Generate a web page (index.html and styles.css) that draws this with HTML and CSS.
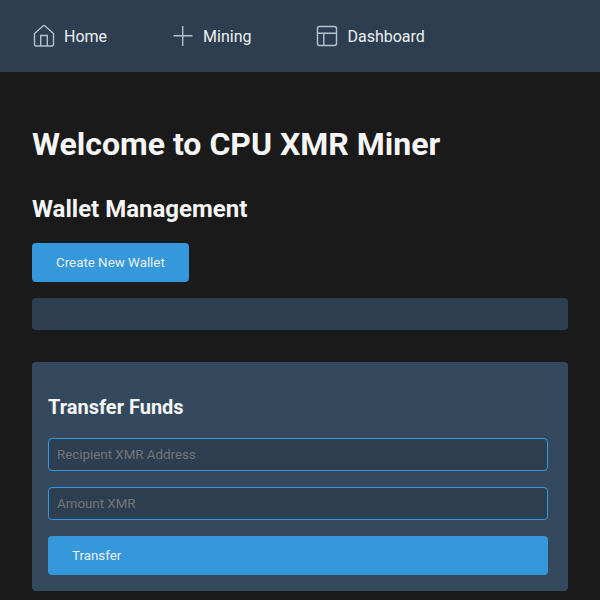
FILE: index.html
```html
<!DOCTYPE html>
<html lang="en">
<head>
  <meta charset="UTF-8">
  <meta name="viewport" content="width=device-width, initial-scale=1.0">
  <title>CPU XMR Miner</title>
  <link rel="stylesheet" href="styles.css">
</head>
<body>
  <nav class="nav">
    <a class="nav-link" href="#">
      <svg class="nav-icon" viewBox="0 0 24 24"><path d="M2.500 9.500 11 2a1.500 1.500 0 0 1 2 0l8.500 7.500V20.500a1.500 1.500 0 0 1-1.500 1.500H4a1.500 1.500 0 0 1-1.500-1.500z"/><path d="M8.700 22V11.500h6.600V22"/></svg>
      <span>Home</span>
    </a>
    <a class="nav-link" href="#">
      <svg class="nav-icon" viewBox="0 0 24 24"><path d="M11.700 2v20M2.500 11.800h19"/></svg>
      <span>Mining</span>
    </a>
    <a class="nav-link" href="#">
      <svg class="nav-icon" viewBox="0 0 24 24"><rect x="2.500" y="2.500" width="19" height="19" rx="2"/><path d="M2.500 9.300h19M8.800 9.300v12.200"/></svg>
      <span>Dashboard</span>
    </a>
  </nav>

  <main class="content">
    <h1>Welcome to CPU XMR Miner</h1>
    <h2>Wallet Management</h2>
    <button class="btn">Create New Wallet</button>
    <div class="wallet-info"></div>

    <section class="panel">
      <h3>Transfer Funds</h3>
      <input class="field" type="text" placeholder="Recipient XMR Address">
      <input class="field" type="text" placeholder="Amount XMR">
      <button class="btn btn-full">Transfer</button>
    </section>
  </main>
</body>
</html>
```

FILE: styles.css
```css
/* Page */
* {
  box-sizing: border-box;
}

body {
  margin: 0;
  font-family: Roboto, "Liberation Sans", sans-serif;
  color: #f5f5f5;
  background-color: #1a1a1a;
}

/* Top navigation */
.nav {
  display: flex;
  gap: 64px;
  height: 72px;
  padding: 24px 32px;
  background-color: #2c3e50;
}

.nav-link {
  display: flex;
  align-items: center;
  gap: 8px;
  font-size: 16px;
  color: #ecf0f1;
  text-decoration: none;
}

.nav-icon {
  width: 24px;
  height: 24px;
  fill: none;
  stroke: #b4c2cc;
  stroke-width: 1.400;
}

/* Main content */
.content {
  padding: 32px;
}

h1 {
  margin: 21px 0 0;
  font-size: 32px;
  line-height: 38px;
  font-weight: 700;
}

h2 {
  margin: 32px 0 0;
  font-size: 24px;
  line-height: 28px;
  font-weight: 700;
}

h3 {
  margin: 17px 0 19px;
  font-size: 20px;
  line-height: 24px;
  font-weight: 700;
}

.btn {
  display: block;
  height: 39px;
  padding: 0 24px;
  font-family: inherit;
  font-size: 13.333px;
  text-align: left;
  color: #ecf0f1;
  background-color: #3498db;
  border: none;
  border-radius: 4px;
  cursor: pointer;
}

.btn-full {
  width: 100%;
}

h2 + .btn {
  margin-top: 20px;
}

.wallet-info {
  height: 32px;
  margin-top: 16px;
  background-color: #2c3e50;
  border-radius: 4px;
}

.panel {
  margin-top: 32px;
  padding: 16px 20px 16px 16px;
  background-color: #34495e;
  border-radius: 4px;
}

.field {
  display: block;
  width: 100%;
  height: 33px;
  margin-bottom: 16px;
  padding: 0 8px;
  font-family: inherit;
  font-size: 13.333px;
  color: #ecf0f1;
  background-color: #2c3e50;
  border: 1px solid #3498db;
  border-radius: 4px;
}

.field::placeholder {
  color: #757575;
}
```
